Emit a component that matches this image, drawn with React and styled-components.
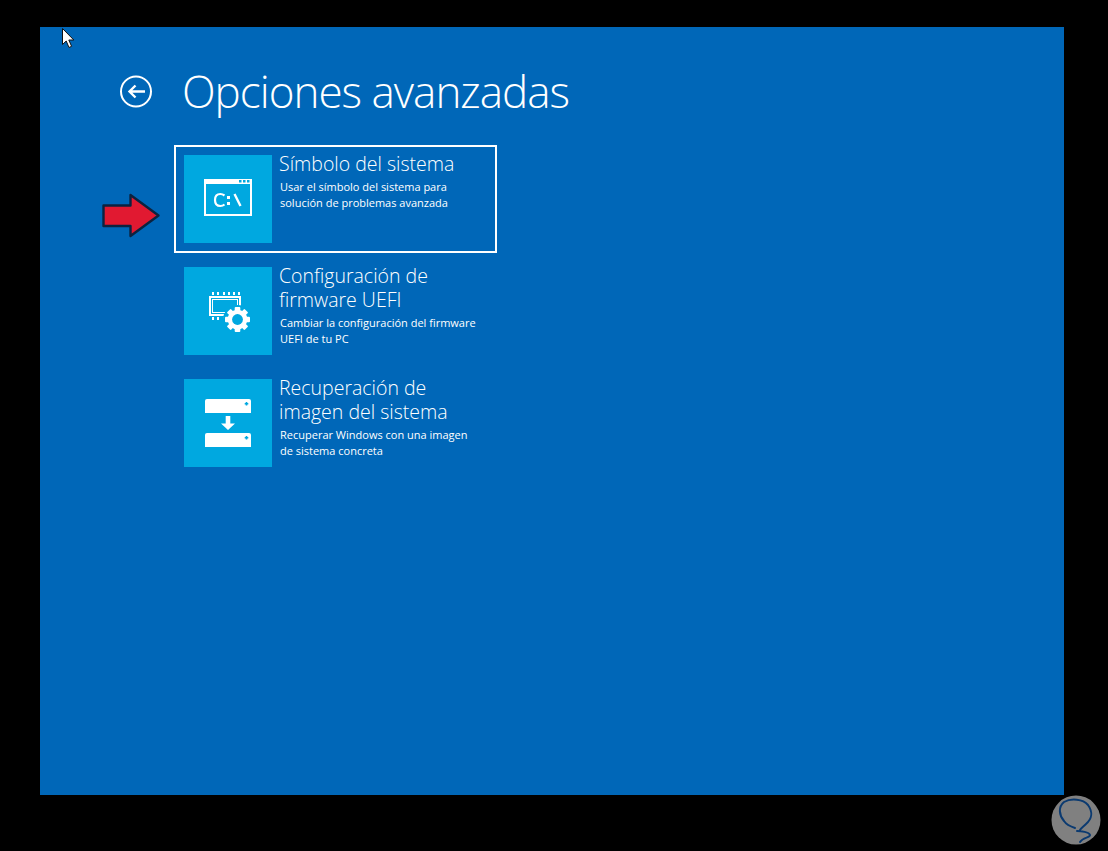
import React from "react";
import styled, { createGlobalStyle } from "styled-components";

const Global = createGlobalStyle`
  html, body { margin: 0; padding: 0; background: #000; }
  body { font-family: "Open Sans", "Noto Sans", sans-serif; color: #fff; }
`;

const Page = styled.div`
  position: relative;
  width: 1108px;
  height: 851px;
  background: #000;
  overflow: hidden;
  padding: 27px 44px 56px 40px;
  box-sizing: border-box;
`;

const Screen = styled.main`
  position: relative;
  width: 1024px;
  height: 768px;
  background: #0067b8;
  padding: 37px 0 0 80px;
  box-sizing: border-box;
`;

const Header = styled.header`
  display: flex;
  align-items: center;
  gap: 30px;
  height: 56px;
`;

const BackIcon = styled.svg`
  width: 33px;
  height: 33px;
  flex: none;
  margin-top: -2px;
`;

const Title = styled.h1`
  margin: -2px 0 0 -1px;
  font-size: 44px;
  font-weight: 300;
  letter-spacing: -1px;
  line-height: 56px;
  white-space: nowrap;
`;

const OptionList = styled.div`
  display: flex;
  flex-direction: column;
  gap: 4px;
  margin: 25px 0 0 54px;
`;

const Option = styled.div`
  display: flex;
  width: 323px;
  height: 108px;
  box-sizing: border-box;
  padding: 8px;
  border: 2px solid ${(p) => (p.$selected ? "#fff" : "transparent")};
  gap: 7px;
`;

const Tile = styled.div`
  width: 88px;
  height: 88px;
  flex: none;
  background: #00a8e0;
  display: flex;
  align-items: center;
  justify-content: center;
`;

const OptionText = styled.div`
  display: flex;
  flex-direction: column;
  margin-top: -3px;
  min-width: 0;
`;

const OptionTitle = styled.div`
  font-size: 19.5px;
  font-weight: 300;
  line-height: 24px;
  margin-bottom: 3px;
  white-space: nowrap;
`;

const OptionDesc = styled.div`
  font-size: 11px;
  font-weight: 400;
  line-height: 16px;
  white-space: nowrap;
  margin-left: 1px;
`;

const Cursor = styled.svg`
  position: absolute;
  left: 21px;
  top: 0px;
  width: 16px;
  height: 24px;
`;

const RedArrow = styled.svg`
  position: absolute;
  left: 61px;
  top: 166px;
  width: 60px;
  height: 46px;
`;

const Watermark = styled.svg`
  position: absolute;
  left: 1051px;
  top: 795px;
  width: 50px;
  height: 50px;
`;

const CYAN = "#00a8e0";

function CmdIcon() {
  return (
    <svg width="48" height="40" viewBox="0 0 48 40" fill="none">
      <rect x="1" y="1" width="46" height="35" stroke="#fff" strokeWidth="2" />
      <rect x="0" y="0" width="48" height="5" fill="#fff" />
      <rect x="35" y="1" width="2.5" height="2.5" fill={CYAN} />
      <rect x="39" y="1" width="2.5" height="2.5" fill={CYAN} />
      <rect x="43" y="1" width="2.5" height="2.5" fill={CYAN} />
      <path d="M20.5 16.5C19 15.4 17.8 15 16.4 15 13 15 11 17.4 11 21 11 24.6 13 27 16.4 27 17.8 27 19.2 26.6 20.5 25.5" stroke="#fff" strokeWidth="2.2" />
      <rect x="23" y="17" width="3" height="3" fill="#fff" />
      <rect x="23" y="23" width="3" height="3" fill="#fff" />
      <path d="M30.5 15 36.5 27" stroke="#fff" strokeWidth="2.4" />
    </svg>
  );
}

function FirmwareIcon() {
  const teeth = [0, 45, 90, 135];
  return (
    <svg width="44" height="44" viewBox="0 0 44 44" fill="none">
      {[6, 11, 17, 22, 27, 32].map((x) => (
        <rect key={x} x={x} y="3" width="2" height="3" fill="#fff" />
      ))}
      {[6, 11, 17].map((x) => (
        <rect key={x} x={x} y="28" width="2" height="3" fill="#fff" />
      ))}
      <rect x="4" y="8" width="30" height="18" stroke="#fff" strokeWidth="2" />
      <rect x="6.5" y="10.5" width="25" height="13" stroke="#fff" strokeWidth="1" />
      <circle cx="31.5" cy="30.5" r="14.5" fill={CYAN} />
      <g transform="translate(31.5 30.5)">
        {teeth.map((a) => (
          <rect key={a} x="-2.8" y="-12.5" width="5.6" height="25" rx="1" fill="#fff" transform={`rotate(${a})`} />
        ))}
        <circle r="9.8" fill="#fff" />
        <circle r="5.4" fill={CYAN} />
      </g>
    </svg>
  );
}

function RestoreIcon() {
  return (
    <svg width="46" height="48" viewBox="0 0 46 48" fill="none">
      <path d="M2 0H44A2 2 0 0 1 46 2V14H0V2A2 2 0 0 1 2 0Z" fill="#fff" />
      <path d="M40.7 3H42.3V4H43.3V5.6H42.3V6.6H40.7V5.6H39.7V4H40.7Z" fill={CYAN} />
      <path d="M20.7 17H25.3V24.5H30L23 31 16 24.5H20.7Z" fill="#fff" />
      <path d="M2 34H44A2 2 0 0 1 46 36V48H0V36A2 2 0 0 1 2 34Z" fill="#fff" />
      <path d="M40.7 37H42.3V38H43.3V39.6H42.3V40.6H40.7V39.6H39.7V38H40.7Z" fill={CYAN} />
    </svg>
  );
}

export default function App() {
  return (
    <Page>
      <Global />
      <Screen>
        <Header>
          <BackIcon viewBox="0 0 33 33" fill="none">
            <circle cx="16" cy="16.5" r="15" stroke="#fff" strokeWidth="2" />
            <path d="M25 16.5H9.5M15.5 10.5 9.5 16.5 15.5 22.5" stroke="#fff" strokeWidth="2.4" />
          </BackIcon>
          <Title>Opciones avanzadas</Title>
        </Header>
        <OptionList>
          <Option $selected>
            <Tile><CmdIcon /></Tile>
            <OptionText>
              <OptionTitle>Símbolo del sistema</OptionTitle>
              <OptionDesc>Usar el símbolo del sistema para<br />solución de problemas avanzada</OptionDesc>
            </OptionText>
          </Option>
          <Option>
            <Tile><FirmwareIcon /></Tile>
            <OptionText>
              <OptionTitle>Configuración de<br />firmware UEFI</OptionTitle>
              <OptionDesc>Cambiar la configuración del firmware<br />UEFI de tu PC</OptionDesc>
            </OptionText>
          </Option>
          <Option>
            <Tile><RestoreIcon /></Tile>
            <OptionText>
              <OptionTitle>Recuperación de<br />imagen del sistema</OptionTitle>
              <OptionDesc>Recuperar Windows con una imagen<br />de sistema concreta</OptionDesc>
            </OptionText>
          </Option>
        </OptionList>
        <Cursor viewBox="0 0 16 24">
          <path d="M1.5 1.5V17.5L5.2 14 8 20.5 10.6 19.3 7.8 13H12.8Z" fill="#fff" stroke="#111" strokeWidth="1" />
        </Cursor>
        <RedArrow viewBox="0 0 60 46">
          <path d="M2.5 12.5H29.5V2L57.5 22.5 29.5 43V33H2.5Z" fill="#e11931" stroke="#0c2340" strokeWidth="2.4" strokeLinejoin="round" />
        </RedArrow>
      </Screen>
      <Watermark viewBox="0 0 50 50">
        <circle cx="25" cy="25" r="24.5" fill="#808080" />
        <path d="M24 33C18 31 15 29 13 26 8 20 7 12 13 7 20 3 32 4 37 10 42 17 41 24 35 29 32 32 30 33 29 35M26 36C30 36 38 37 39 40 39 43 32 42 29 47" fill="none" stroke="#0b3a70" strokeWidth="2" strokeLinecap="round" />
      </Watermark>
    </Page>
  );
}
